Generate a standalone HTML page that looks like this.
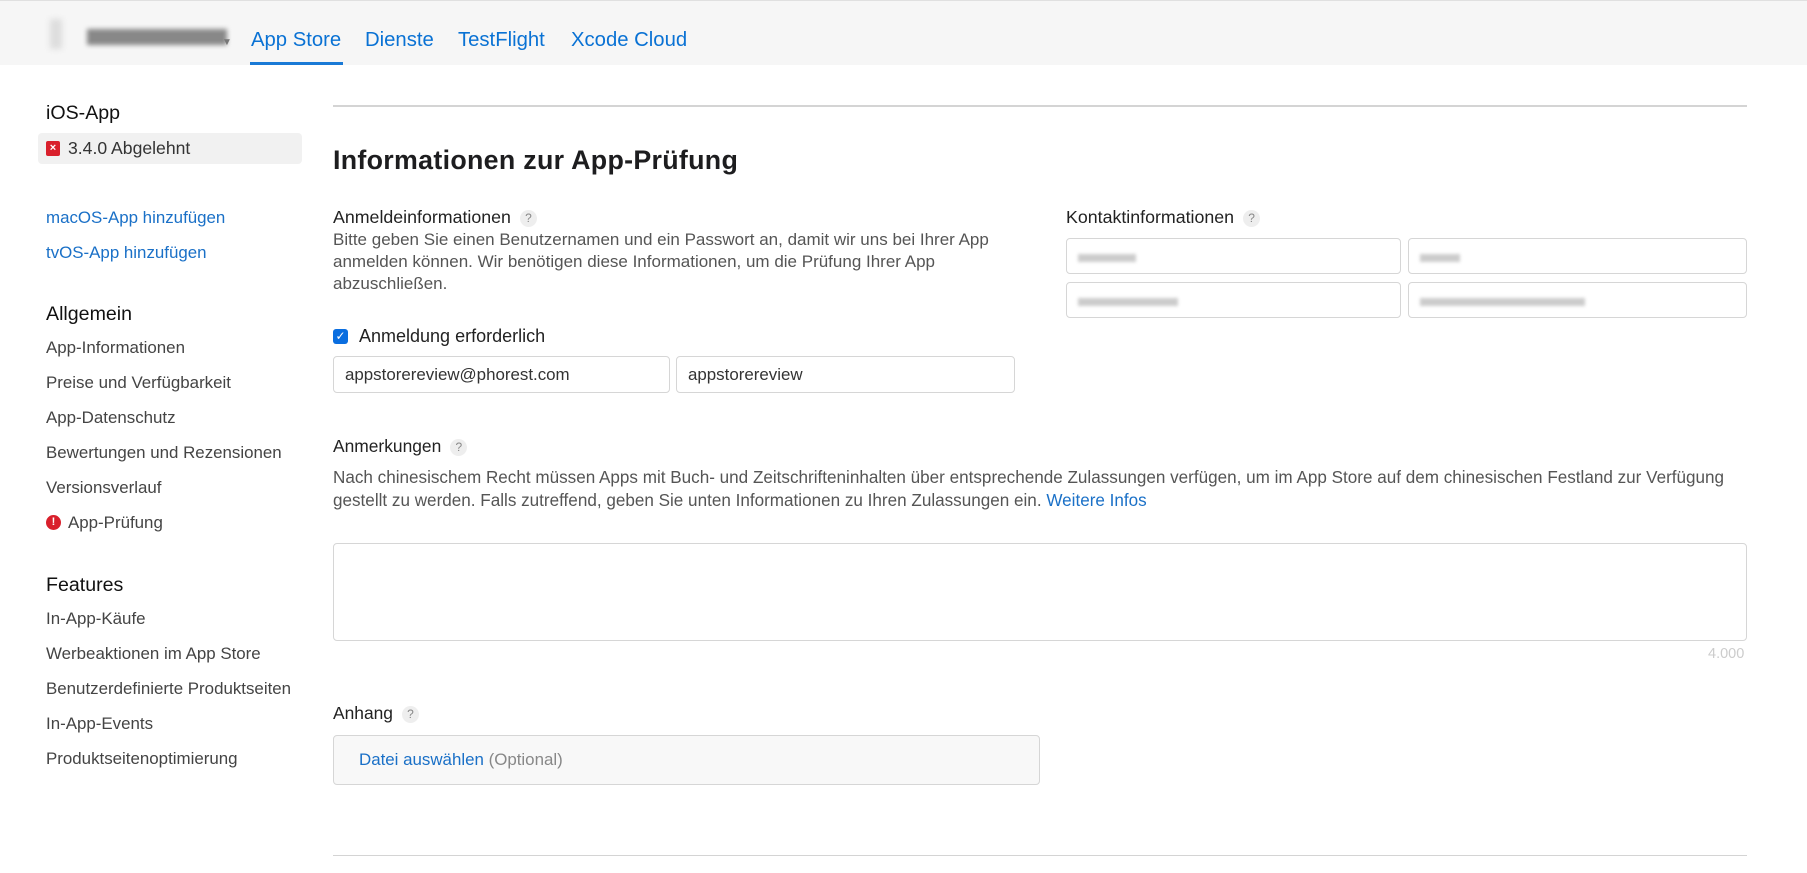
<!DOCTYPE html>
<html><head><meta charset="utf-8"><style>
*{margin:0;padding:0;box-sizing:border-box}
body{width:1807px;height:873px;background:#fff;font-family:"Liberation Sans",sans-serif;color:#333;position:relative;overflow:hidden}
.a{position:absolute;white-space:nowrap;line-height:24px}
.hdr{position:absolute;left:0;top:0;width:1807px;height:65px;background:#f6f6f6;border-top:1px solid #e0e0e0}
.tab{position:absolute;top:27px;font-size:20.3px;color:#0a72d4;line-height:24px}
.side{font-size:16.9px;color:#444}
.link{color:#1a70c7}
.h{font-size:19.6px;color:#111}
.lbl{font-size:17.8px;color:#222}
.q{display:inline-block;width:17px;height:17px;border-radius:50%;background:#eee;color:#888;font-size:12px;line-height:17px;text-align:center;margin-left:9px;vertical-align:1px}
.inp{position:absolute;border:1px solid #d6d6d6;border-radius:4px;background:#fff;font-size:16.9px;color:#333;padding-left:11px;line-height:36px}
.blur{display:inline-block;height:8px;background:#ccc;filter:blur(1.5px);vertical-align:middle}
.p{font-size:17px;color:#555;line-height:22px}
</style></head><body>
<div class="hdr">
 <div class="a" style="left:50px;top:18px;width:12px;height:30px;background:#ddd;filter:blur(3px)"></div>
 <div class="a" style="left:87px;top:28px;width:140px;height:16px;background:#888;filter:blur(2.5px)"></div>
 <div class="a" style="left:222px;top:30px;font-size:10px;color:#777">▼</div>
 <div class="tab" style="left:251px">App Store</div>
 <div class="a" style="left:250px;top:61px;width:93px;height:3px;background:#1a7ad6"></div>
 <div class="tab" style="left:365px">Dienste</div>
 <div class="tab" style="left:458px">TestFlight</div>
 <div class="tab" style="left:571px">Xcode Cloud</div>
</div>

<div class="a h" style="left:46px;top:101px">iOS-App</div>
<div class="a" style="left:38px;top:133px;width:264px;height:31px;background:#f1f1f1;border-radius:4px"></div>
<div class="a" style="left:46px;top:141px;width:14px;height:15px;background:#d9202c;border-radius:2px;color:#fff;font-size:11px;line-height:15px;text-align:center;font-weight:bold">×</div>
<div class="a side" style="left:68px;top:136px;color:#333;font-size:17.6px">3.4.0 Abgelehnt</div>
<div class="a side link" style="left:46px;top:206px">macOS-App hinzufügen</div>
<div class="a side link" style="left:46px;top:241px">tvOS-App hinzufügen</div>
<div class="a h" style="left:46px;top:302px">Allgemein</div>
<div class="a side" style="left:46px;top:336px">App-Informationen</div>
<div class="a side" style="left:46px;top:371px">Preise und Verfügbarkeit</div>
<div class="a side" style="left:46px;top:406px">App-Datenschutz</div>
<div class="a side" style="left:46px;top:441px">Bewertungen und Rezensionen</div>
<div class="a side" style="left:46px;top:476px">Versionsverlauf</div>
<div class="a" style="left:46px;top:515px;width:15px;height:15px;border-radius:50%;background:#d9202c;color:#fff;font-size:11px;line-height:15px;text-align:center;font-weight:bold">!</div>
<div class="a side" style="left:68px;top:511px">App-Prüfung</div>
<div class="a h" style="left:46px;top:573px">Features</div>
<div class="a side" style="left:46px;top:607px">In-App-Käufe</div>
<div class="a side" style="left:46px;top:642px">Werbeaktionen im App Store</div>
<div class="a side" style="left:46px;top:677px">Benutzerdefinierte Produktseiten</div>
<div class="a side" style="left:46px;top:712px">In-App-Events</div>
<div class="a side" style="left:46px;top:747px">Produktseitenoptimierung</div>

<div class="a" style="left:333px;top:105px;width:1414px;height:2px;background:#d4d4d4"></div>
<div class="a" style="left:333px;top:145px;font-size:26.8px;line-height:30px;font-weight:bold;color:#1d1d1f;letter-spacing:.3px">Informationen zur App-Prüfung</div>

<div class="a lbl" style="left:333px;top:205px">Anmeldeinformationen<span class="q">?</span></div>
<div class="a p" style="left:333px;top:229px">Bitte geben Sie einen Benutzernamen und ein Passwort an, damit wir uns bei Ihrer App<br>anmelden können. Wir benötigen diese Informationen, um die Prüfung Ihrer App<br>abzuschließen.</div>
<div class="a" style="left:333px;top:329px;width:15px;height:15px;background:#0a6ee0;border-radius:3px;color:#fff;font-size:12px;line-height:15px;text-align:center">✓</div>
<div class="a lbl" style="left:359px;top:324px;font-size:18px">Anmeldung erforderlich</div>
<div class="inp" style="left:333px;top:356px;width:337px;height:37px">appstorereview@phorest.com</div>
<div class="inp" style="left:676px;top:356px;width:339px;height:37px">appstorereview</div>

<div class="a lbl" style="left:1066px;top:205px">Kontaktinformationen<span class="q">?</span></div>
<div class="inp" style="left:1066px;top:238px;width:335px;height:36px"><span class="blur" style="width:58px"></span></div>
<div class="inp" style="left:1408px;top:238px;width:339px;height:36px"><span class="blur" style="width:40px"></span></div>
<div class="inp" style="left:1066px;top:282px;width:335px;height:36px"><span class="blur" style="width:100px"></span></div>
<div class="inp" style="left:1408px;top:282px;width:339px;height:36px"><span class="blur" style="width:165px"></span></div>

<div class="a lbl" style="left:333px;top:434px;font-size:17.4px">Anmerkungen<span class="q">?</span></div>
<div class="a p" style="left:333px;top:466px;line-height:23px;font-size:17.1px">Nach chinesischem Recht müssen Apps mit Buch- und Zeitschrifteninhalten über entsprechende Zulassungen verfügen, um im App Store auf dem chinesischen Festland zur Verfügung<br>gestellt zu werden. Falls zutreffend, geben Sie unten Informationen zu Ihren Zulassungen ein. <span class="link">Weitere Infos</span></div>
<div class="a" style="left:333px;top:543px;width:1414px;height:98px;border:1px solid #d6d6d6;border-radius:4px"></div>
<div class="a" style="left:1708px;top:642px;font-size:14.5px;color:#ccc">4.000</div>

<div class="a lbl" style="left:333px;top:701px;font-size:17.4px">Anhang<span class="q">?</span></div>
<div class="a" style="left:333px;top:735px;width:707px;height:50px;border:1px solid #d6d6d6;border-radius:4px;background:#f8f8f8"></div>
<div class="a" style="left:359px;top:748px;font-size:16.9px;color:#1a70c7">Datei auswählen <span style="color:#888">(Optional)</span></div>
<div class="a" style="left:333px;top:855px;width:1414px;height:1px;background:#d4d4d4"></div>
</body></html>
